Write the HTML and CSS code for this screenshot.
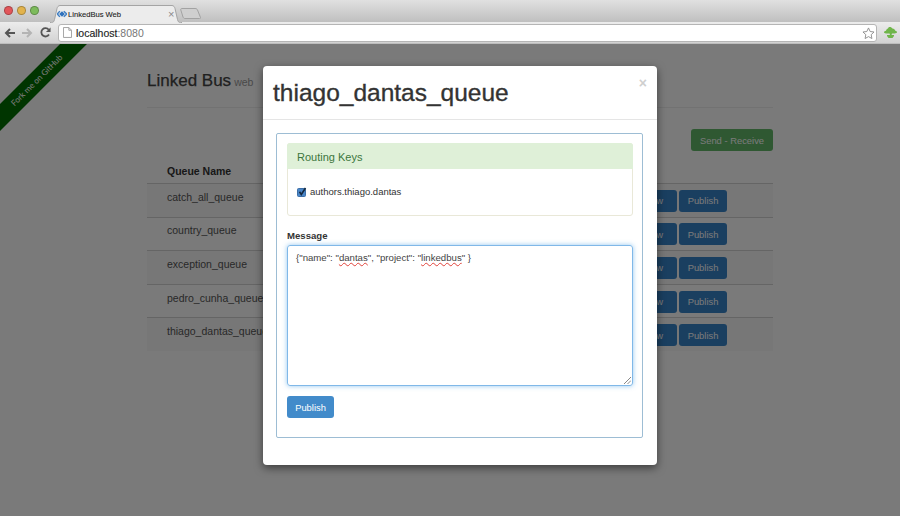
FILE: index.html
```html
<!DOCTYPE html>
<html lang="en">
<head>
<meta charset="utf-8">
<title>LinkedBus Web</title>
<link rel="stylesheet" href="styles.css">
</head>
<body>
<div class="browser">
  <div class="tabstrip">
    <div class="lights">
      <span class="light red"></span><span class="light yellow"></span><span class="light green"></span>
    </div>
    <div class="tab">
      <svg class="tab-shape" width="132" height="18" viewBox="0 0 132 18"><path d="M0 17.500h1.500c2 0 2.500-1 3-3l2.500-11c.4-1.500 1.300-3 3-3h112c1.700 0 2.600 1.500 3 3l2.500 11c.5 2 1 3 3 3h1.500" fill="#ececec" stroke="#a4a4a4"/></svg>
      <svg class="favicon" width="10" height="8" viewBox="0 0 14 10"><path d="M4 1 0.500 5 4 9" fill="none" stroke="#3f7fc4" stroke-width="2"/><path d="M9.500 1 13.500 5 9.500 9" fill="none" stroke="#3f7fc4" stroke-width="2"/><path d="M7 1 11 5 7 9 3 5Z" fill="#2f72bd"/></svg>
      <span class="tab-title">LinkedBus Web</span>
      <span class="tab-close">×</span>
    </div>
    <svg class="newtab" width="21" height="11" viewBox="0 0 21 11"><path d="M2 .5h13c1.500 0 2 .5 2.500 1.500l3 7.500c.2.700 0 1-1 1H5c-1 0-1.500-.5-2-1.500L.8 2C.5 1 1 .5 2 .5Z" fill="#cfcfcf" stroke="#a2a2a2"/></svg>
  </div>
  <div class="toolbar">
    <svg class="nav-icon" width="11" height="10" viewBox="0 0 11 10"><path d="M11 5H2.500M6 1 2 5l4 4" fill="none" stroke="#555" stroke-width="2"/></svg>
    <svg class="nav-icon" width="11" height="10" viewBox="0 0 11 10"><path d="M0 5h8.500M5 1l4 4-4 4" fill="none" stroke="#b4b4b4" stroke-width="2"/></svg>
    <svg class="nav-icon" width="11" height="11" viewBox="0 0 12 12"><path d="M9.800 8.200A4.500 4.500 0 1 1 9.500 3" fill="none" stroke="#555" stroke-width="2"/><path d="M11.500.5v5h-5Z" fill="#555"/></svg>
    <div class="omnibox">
      <svg class="page-icon" width="9" height="11" viewBox="0 0 10 12"><path d="M.5.5h6l3 3v8h-9ZM6.500.5v3h3" fill="#fff" stroke="#9a9a9a"/></svg>
      <span class="host">localhost</span><span class="port">:8080</span>
      <svg class="star" width="13" height="12" viewBox="0 0 14 13"><path d="M7 1l1.800 3.900 4.200.5-3.100 2.900.8 4.200L7 10.400 3.300 12.500l.8-4.200L1 5.400l4.200-.5Z" fill="#fff" stroke="#8c8c8c"/></svg>
    </div>
    <svg class="bonsai" width="13" height="11" viewBox="0 0 13 11"><path d="M5.500 0C7 0 8 .6 8.400 1.500 10 1.600 11 2.600 11.300 3.800 12.300 4 13 4.600 13 5.300 13 6 12 6.500 10.500 6.500H8L7.500 8H10V9L8.500 11h-4L3 9V8h3L5.600 6.500H2C.8 6.500 0 6 0 5.300 0 4.500 1 4 2 3.800 2.300 2.600 3 1.800 4 1.500 4.200.6 4.800 0 5.500 0Z" fill="#6fb54a"/></svg>
  </div>
</div>

<main class="page">
  <div class="content">
    <header class="page-header">
      <h1 class="brand"><span>Linked Bus</span><small class="brand-sub">web</small></h1>
    </header>
    <div class="actions"><a class="btn btn-success">Send - Receive</a></div>
    <div class="table">
      <div class="row row-head"><span class="cell-name">Queue Name</span></div>
      <div class="row row-odd"><span class="cell-name">catch_all_queue</span><span class="cell-actions"><a class="btn btn-row">View</a><a class="btn btn-row">Publish</a></span></div>
      <div class="row"><span class="cell-name">country_queue</span><span class="cell-actions"><a class="btn btn-row">View</a><a class="btn btn-row">Publish</a></span></div>
      <div class="row row-odd"><span class="cell-name">exception_queue</span><span class="cell-actions"><a class="btn btn-row">View</a><a class="btn btn-row">Publish</a></span></div>
      <div class="row"><span class="cell-name">pedro_cunha_queue</span><span class="cell-actions"><a class="btn btn-row">View</a><a class="btn btn-row">Publish</a></span></div>
      <div class="row row-odd"><span class="cell-name">thiago_dantas_queue</span><span class="cell-actions"><a class="btn btn-row">View</a><a class="btn btn-row">Publish</a></span></div>
    </div>
  </div>

  <a class="ribbon">Fork me on GitHub</a>
  <div class="backdrop"></div>

  <section class="modal">
    <header class="modal-header">
      <h2 class="modal-title">thiago_dantas_queue</h2>
      <span class="modal-close">×</span>
    </header>
    <div class="modal-body">
      <form class="well">
        <div class="panel">
          <div class="panel-heading">Routing Keys</div>
          <div class="panel-body">
            <svg class="check" width="10" height="10" viewBox="0 0 10 10"><rect x=".5" y="1.500" width="8" height="8" rx="1" fill="#4a86c8" stroke="#3c6ea6"/><path d="M2.500 4.800 4.300 7.500 8.500 1" fill="none" stroke="#14283e" stroke-width="1.600"/></svg>
            <span>authors.thiago.dantas</span>
          </div>
        </div>
        <div class="field-label">Message</div>
        <div class="textarea" role="textbox">{"name": "<span class="misspelt">dantas</span>", "project": "<span class="misspelt">linkedbus</span>" }
          <svg class="grip" width="7" height="7" viewBox="0 0 7 7"><path d="M0 7 7 0M3.500 7 7 3.500" stroke="#888" fill="none"/></svg>
        </div>
        <a class="btn btn-live">Publish</a>
      </form>
    </div>
  </section>
</main>
</body>
</html>
```

FILE: styles.css
```css
* { box-sizing: border-box; }
html, body { margin: 0; padding: 0; }
body {
  width: 900px;
  height: 516px;
  overflow: hidden;
  font-family: "Liberation Sans", Arial, sans-serif;
  font-size: 10.5px;
  color: #333;
  background: #fff;
}

/* Browser chrome */
.browser { height: 44px; }
.tabstrip {
  height: 22px;
  display: flex;
  align-items: flex-end;
  background: linear-gradient(#e0e0e0, #bfbfbf);
}
.lights { display: flex; gap: 4px; padding: 0 0 7px 4px; width: 50px; }
.light { width: 9px; height: 9px; border-radius: 50%; border: 1px solid rgba(0,0,0,.25); }
.red { background: #e2565a; }
.yellow { background: #e2b34d; }
.green { background: #7dbb5c; }
.tab {
  position: relative;
  width: 132px;
  height: 18px;
  display: flex;
  align-items: center;
  padding: 0 0 0 7px;
  margin-bottom: -1px;
  z-index: 1;
}
.tab-shape { position: absolute; inset: 0; }
.favicon { position: relative; }
.tab-title { position: relative; margin-left: 1px; font-size: 7.6px; color: #222; -webkit-text-stroke: .1px #222; width: 100px; }
.tab-close { position: relative; font-size: 11px; color: #8a8a8a; line-height: 1; }
.newtab { margin: 0 0 3px -2px; }
.toolbar {
  height: 22px;
  display: flex;
  align-items: center;
  padding-left: 4px;
  background: linear-gradient(#ececec, #d2d2d2);
  border-bottom: 1px solid #bdbdbd;
}
.nav-icon { flex: none; margin-right: 7px; }
.omnibox {
  width: 819px;
  height: 18px;
  display: flex;
  align-items: center;
  background: #fff;
  border: 1px solid #b5b5b5;
  border-radius: 3px;
  padding: 0 1px 0 4px;
  font-size: 10.5px;
}
.page-icon { margin-right: 4px; }
.host { color: #222; -webkit-text-stroke: .15px #222; }
.port { color: #777; }
.star { margin-left: auto; }
.bonsai { margin-left: 7px; }

/* Page */
.page {
  position: relative;
  height: 472px;
  overflow: hidden;
  background: #fff;
}
.content { width: 626px; margin-left: 147px; padding-top: 27px; }
.page-header { height: 37px; border-bottom: 1px solid #eee; }
.brand { display: flex; align-items: baseline; gap: 3px; margin: 0; font-size: 17px; font-weight: 400; line-height: 19px; color: #444; -webkit-text-stroke: .25px #444; }
.brand-sub { font-size: 10.5px; color: #999; -webkit-text-stroke: 0; }
.actions { display: flex; justify-content: flex-end; padding-top: 21px; height: 44px; }
.btn {
  display: inline-flex;
  align-items: center;
  justify-content: center;
  height: 22px;
  border-radius: 3px;
  font-size: 9.4px;
  color: #fff;
  text-decoration: none;
}
.btn-success { width: 82px; background: #62b86a; }
.btn-row { width: 48px; background: #3784c8; }
.btn-live { width: 47px; margin-top: 10px; background: #428bca; }
.row {
  height: 33.6px;
  display: flex;
  align-items: center;
  justify-content: space-between;
  padding: 1px 46px 0 20px;
  border-top: 1px solid #d4d4d4;
  line-height: 15px;
  font-size: 10.5px;
  color: #555;
}
.row-head { height: 31px; border-top: 0; font-weight: 700; padding-top: 15px; color: #333; }
.row-odd { background: #f9f9f9; }
.cell-name { position: relative; top: -3.5px; }
.cell-actions { display: flex; gap: 2px; }

.ribbon {
  position: absolute;
  left: -63.5px;
  top: 27px;
  width: 200px;
  height: 19px;
  transform: rotate(-45deg);
  background: #007000;
  color: #fff;
  font-family: Lato, sans-serif;
  font-size: 8.2px;
  text-align: center;
  line-height: 19px;
}
.backdrop { position: absolute; inset: 0; background: rgba(0,0,0,.52); }

/* Modal */
.modal {
  position: absolute;
  left: 263px;
  top: 22px;
  width: 394px;
  height: 399px;
  background: #fff;
  border-radius: 4px;
  box-shadow: 0 3px 9px rgba(0,0,0,.5);
}
.modal-header {
  position: relative;
  height: 54px;
  padding: 12px 10px 0;
  border-bottom: 1px solid #e5e5e5;
}
.modal-title { margin: 0; font-size: 24.5px; line-height: 30px; font-weight: 400; color: #333; -webkit-text-stroke: .35px #333; }
.modal-close { position: absolute; right: 10px; top: 7px; font-size: 14px; font-weight: 700; line-height: 20px; color: #cfcfcf; }
.modal-body { padding: 13px 14px 0 13px; }
.well {
  height: 305px;
  border: 1px solid #9dbdd4;
  border-radius: 2px;
  padding: 9px 9px 0 10px;
}
.panel { height: 73px; border: 1px solid #e9e8d8; border-radius: 3px; }
.panel-heading {
  height: 26px;
  margin: -1px -1px 0;
  padding: 0 10px;
  background: #dff0d8;
  border-radius: 3px 3px 0 0;
  color: #3c763d;
  font-size: 11px;
  line-height: 28px;
}
.panel-body { display: flex; align-items: center; gap: 3px; padding: 16px 9px 0; line-height: 13px; font-size: 9.5px; }
.check { flex: none; }
.field-label { margin-top: 14px; font-weight: 700; line-height: 12px; font-size: 9.6px; }
.textarea {
  position: relative;
  height: 141px;
  margin-top: 3px;
  padding: 5px 8px;
  border: 1px solid #80b8e8;
  border-radius: 3px;
  box-shadow: 0 0 5px rgba(102,175,233,.7);
  line-height: 13px;
  font-size: 9.65px;
  color: #444;
}
.misspelt { text-decoration: underline wavy #e0423a 1px; text-underline-offset: 1px; }
.grip { position: absolute; right: 1px; bottom: 1px; }
```
